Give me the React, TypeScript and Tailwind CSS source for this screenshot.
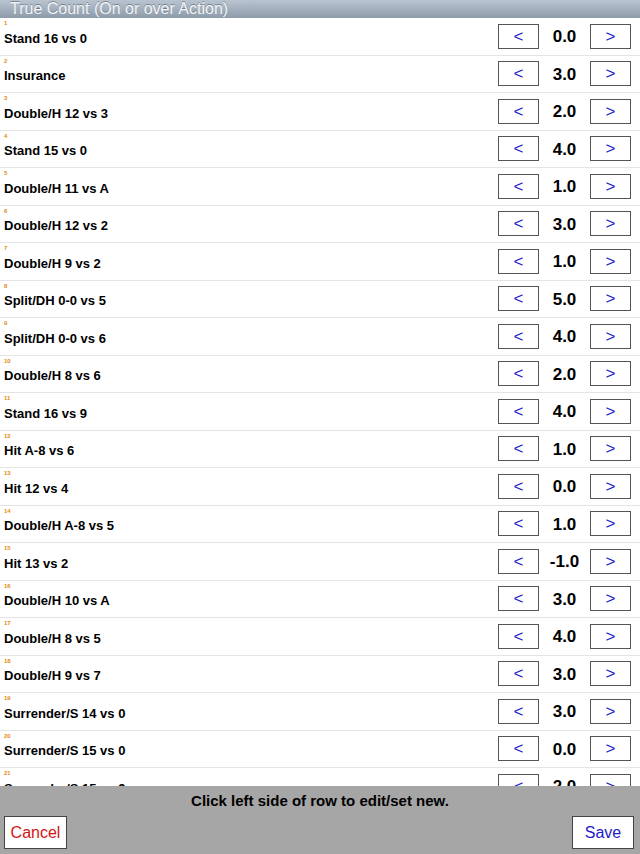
const ROWS: { label: string; value: string }[] = [
  { label: 'Stand 16 vs 0', value: '0.0' },
  { label: 'Insurance', value: '3.0' },
  { label: 'Double/H 12 vs 3', value: '2.0' },
  { label: 'Stand 15 vs 0', value: '4.0' },
  { label: 'Double/H 11 vs A', value: '1.0' },
  { label: 'Double/H 12 vs 2', value: '3.0' },
  { label: 'Double/H 9 vs 2', value: '1.0' },
  { label: 'Split/DH 0-0 vs 5', value: '5.0' },
  { label: 'Split/DH 0-0 vs 6', value: '4.0' },
  { label: 'Double/H 8 vs 6', value: '2.0' },
  { label: 'Stand 16 vs 9', value: '4.0' },
  { label: 'Hit A-8 vs 6', value: '1.0' },
  { label: 'Hit 12 vs 4', value: '0.0' },
  { label: 'Double/H A-8 vs 5', value: '1.0' },
  { label: 'Hit 13 vs 2', value: '-1.0' },
  { label: 'Double/H 10 vs A', value: '3.0' },
  { label: 'Double/H 8 vs 5', value: '4.0' },
  { label: 'Double/H 9 vs 7', value: '3.0' },
  { label: 'Surrender/S 14 vs 0', value: '3.0' },
  { label: 'Surrender/S 15 vs 0', value: '0.0' },
  { label: 'Surrender/S 15 vs 9', value: '2.0' },
];

function StepButton({ children }: { children: string }) {
  return (
    <button className="w-[41px] h-[25px] border border-[#555] bg-white text-[#2323c8] text-[17px] leading-none flex items-center justify-center">
      {children}
    </button>
  );
}

export default function App() {
  return (
    <div className="h-[854px] w-[640px] flex flex-col overflow-hidden bg-white font-['Liberation_Sans',Arial,sans-serif]">
      {/* title bar */}
      <div className="h-[18px] shrink-0 bg-gradient-to-b from-[#b9c4d0] to-[#8d9baa] pl-[10px] flex items-center">
        <span className="text-[16px] leading-none text-[#f4f6f8] [text-shadow:0_-1px_0_rgba(60,70,80,0.5)]">
          True Count (On or over Action)
        </span>
      </div>

      {/* rows */}
      <div className="flex-1 overflow-hidden">
        {ROWS.map((row, i) => (
          <div key={i} className="relative h-[37.5px] border-b border-[#e4e4e4] flex items-center pr-[9px]">
            <span className="absolute left-[4px] top-[2px] text-[6px] font-bold leading-none text-[#e58a12]">{i + 1}</span>
            <span className="flex-1 pl-[4px] pt-[4px] text-[13px] font-bold text-black">{row.label}</span>
            <StepButton>&lt;</StepButton>
            <span className="w-[51px] pt-[1px] text-center text-[17px] font-bold text-black">{row.value}</span>
            <StepButton>&gt;</StepButton>
          </div>
        ))}
      </div>

      {/* footer */}
      <div className="h-[68px] shrink-0 bg-[#a6a6a6] flex flex-col">
        <p className="pt-[6px] text-center text-[15px] font-bold text-black leading-[18px]">
          Click left side of row to edit/set new.
        </p>
        <div className="mt-[6px] flex justify-between px-[4px]">
          <button className="w-[63px] h-[33px] bg-white border border-[#444] text-[16px] text-[#d41414]">Cancel</button>
          <button className="w-[62px] h-[33px] mr-[2px] bg-white border border-[#444] text-[16px] text-[#1c1cc8]">Save</button>
        </div>
      </div>
    </div>
  );
}
